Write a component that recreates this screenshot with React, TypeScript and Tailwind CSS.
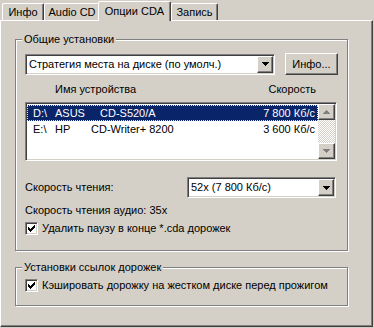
import type { ReactNode } from "react";

const raised =
  "border border-t-white border-l-white border-r-[#404040] border-b-[#404040] shadow-[inset_-1px_-1px_0_#808080]";
const sunken =
  "border border-t-[#808080] border-l-[#808080] border-r-white border-b-white shadow-[inset_1px_1px_0_#404040,inset_-1px_-1px_0_#d4d0c8]";

function Arrow({ down = true, color = "#000" }: { down?: boolean; color?: string }) {
  const rows = down ? [0, 1, 2, 3] : [3, 2, 1, 0];
  return (
    <svg width="7" height="4" shapeRendering="crispEdges">
      {rows.map((r, i) => (
        <rect key={i} x={r} y={i} width={7 - r * 2} height={1} fill={color} />
      ))}
    </svg>
  );
}

function Combo({ text, className }: { text: string; className: string }) {
  return (
    <div className={`${sunken} bg-white flex items-center p-[1px] ${className}`}>
      <span className="flex-1 pl-[2px] whitespace-nowrap overflow-hidden">{text}</span>
      <div className={`w-[16px] h-[17px] ${raised} bg-[#d4d0c8] flex items-center justify-center`}>
        <Arrow />
      </div>
    </div>
  );
}

function Check({ label }: { label: string }) {
  return (
    <div className="flex items-center h-[13px]">
      <div className={`w-[13px] h-[13px] ${sunken} bg-white flex items-center justify-center`}>
        <svg width="7" height="7" shapeRendering="crispEdges">
          <path
            d="M6 0h1v3h-1zM5 1h1v3h-1zM4 2h1v3h-1zM3 3h1v3h-1zM2 4h1v3h-1zM1 3h1v3h-1zM0 2h1v3h-1z"
            fill="#000"
          />
        </svg>
      </div>
      <span className="ml-[4px] whitespace-nowrap">{label}</span>
    </div>
  );
}

function Group({ title, className, children }: { title: string; className: string; children: ReactNode }) {
  return (
    <div className={`relative border border-[#808080] shadow-[inset_1px_1px_0_#fff,1px_1px_0_#fff] ${className}`}>
      <span className="absolute left-[6px] top-[-8px] bg-[#d4d0c8] px-[2px] leading-[14px] whitespace-nowrap">
        {title}
      </span>
      {children}
    </div>
  );
}

const drives = [
  { drive: "D:\\", vendor: "ASUS", model: "CD-S520/A", vendorW: "w-[45px]", speed: "7 800 Кб/с", selected: true },
  { drive: "E:\\", vendor: "HP", model: "CD-Writer+ 8200", vendorW: "w-[36px]", speed: "3 600 Кб/с", selected: false },
];

const tab =
  "h-[17px] border-l border-t border-white border-r border-r-[#404040] shadow-[inset_-1px_0_0_#808080] rounded-t-[2px] bg-[#d4d0c8] flex items-center justify-center pt-[1px]";

export default function App() {
  return (
    <div className="w-[374px] h-[328px] bg-[#d4d0c8] text-black text-[11px] leading-[13px] font-['Liberation_Sans',Arial,sans-serif] overflow-hidden">
      <div className="relative z-10 flex items-end h-[20px] pl-[2px]">
        <div className={`w-[42px] ${tab}`}>Инфо</div>
        <div className={`w-[56px] ${tab}`}>Audio CD</div>
        <div className="relative z-10 w-[73px] h-[20px] mb-[-1px] ml-[-2px] border-l border-t border-white border-r border-r-[#404040] shadow-[inset_-1px_0_0_#808080] rounded-t-[2px] bg-[#d4d0c8] flex items-start justify-center pt-[3px]">
          Опции CDA
        </div>
        <div className={`w-[47px] ${tab}`}>Запись</div>
      </div>

      <div className={`w-[373px] h-[307px] ${raised} pl-[14px] pt-[18px]`}>
        <Group title="Общие установки" className="w-[333px] h-[212px] pl-[9px] pt-[13px]">
          <div className="flex items-center gap-[10px]">
            <Combo text="Стратегия места на диске (по умолч.)" className="w-[250px] h-[21px]" />
            <button className={`w-[53px] h-[22px] ${raised} bg-[#d4d0c8] flex items-center justify-center`}>
              Инфо...
            </button>
          </div>

          <div className="flex items-center h-[14px] mt-[7px] w-[312px]">
            <span className="pl-[30px]">Имя устройства</span>
            <span className="ml-auto pr-[21px]">Скорость</span>
          </div>

          <div className={`mt-[6px] w-[312px] h-[59px] ${sunken} bg-white p-[1px] flex`}>
            <div className="flex-1 pt-[1px]">
              {drives.map((d) => (
                <div
                  key={d.drive}
                  className={`flex items-center h-[16px] pl-[6px] pr-[3px] whitespace-nowrap ${
                    d.selected
                      ? "bg-[#0a246a] text-white outline outline-1 outline-dotted outline-[#e8e8a0] -outline-offset-1"
                      : ""
                  }`}
                >
                  <span className="w-[22px]">{d.drive}</span>
                  <span className={d.vendorW}>{d.vendor}</span>
                  <span>{d.model}</span>
                  <span className="ml-auto">{d.speed}</span>
                </div>
              ))}
            </div>
            <div className="w-[17px] flex flex-col bg-[repeating-conic-gradient(#d4d0c8_0_25%,#fff_0_50%)] bg-[length:2px_2px]">
              <div className={`h-[16px] ${raised} bg-[#d4d0c8] flex items-center justify-center`}>
                <Arrow down={false} color="#808080" />
              </div>
              <div className="flex-1" />
              <div className={`h-[16px] ${raised} bg-[#d4d0c8] flex items-center justify-center`}>
                <Arrow color="#808080" />
              </div>
            </div>
          </div>

          <div className="flex items-center mt-[16px] h-[21px]">
            <span className="w-[162px]">Скорость чтения:</span>
            <Combo text="52x (7 800 Кб/с)" className="w-[149px] h-[21px]" />
          </div>

          <div className="mt-[5px] h-[14px] flex items-center">Скорость чтения аудио: 35x</div>

          <div className="mt-[5px]">
            <Check label="Удалить паузу в конце *.cda дорожек" />
          </div>
        </Group>

        <Group title="Установки ссылок дорожек" className="mt-[16px] w-[333px] h-[39px] pl-[9px] pt-[11px]">
          <Check label="Кэшировать дорожку на жестком диске перед прожигом" />
        </Group>
      </div>
    </div>
  );
}
